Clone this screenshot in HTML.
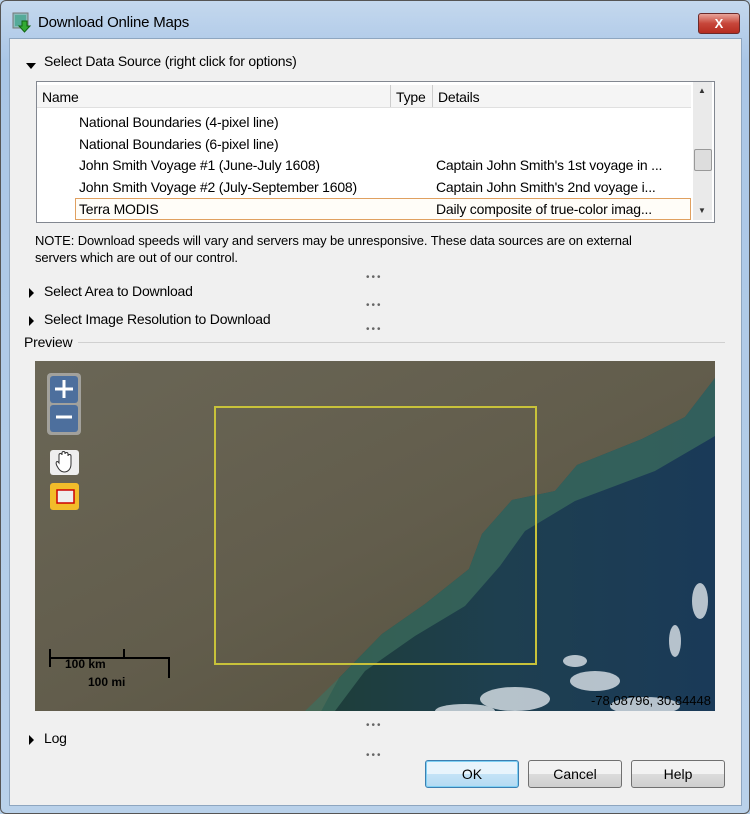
<!DOCTYPE html>
<html><head><style>
body{margin:0;width:750px;height:814px;background:#b9d1ea;font-family:"Liberation Sans",sans-serif;font-size:13px;color:#000;position:relative;overflow:hidden}
.frame{position:absolute;left:0;top:0;width:748px;height:812px;border:1px solid #555;border-radius:6px;background:linear-gradient(#c4d8ee,#aac6e6 60px,#b9d1ea)}
.content{position:absolute;left:9px;top:38px;width:731px;height:766px;background:#f0f0f0;border:1px solid #8ea6c0}
.a{position:absolute;white-space:nowrap}
.t{font-size:14px;letter-spacing:-0.2px}
.tri-d{display:inline-block;width:0;height:0;border-left:5px solid transparent;border-right:5px solid transparent;border-top:6px solid #000}
.tri-r{display:inline-block;width:0;height:0;border-top:5px solid transparent;border-bottom:5px solid transparent;border-left:5px solid #000}
.btn{position:absolute;top:760px;width:92px;height:26px;border:1px solid #707070;border-radius:3px;background:linear-gradient(#f2f2f2 50%,#dcdcdc 50%,#cfcfcf);text-align:center;line-height:26px;font-size:14px}
.dots{position:absolute;left:366px;font-size:10px;letter-spacing:2px;color:#666}
</style></head><body>
<div class="frame"></div>
<svg class="a" style="left:12px;top:12px" width="20" height="22"><rect x="1" y="1" width="15" height="15" fill="#8bb" stroke="#777"/><rect x="3" y="3" width="11" height="11" fill="#5a9"/><path d="M10 9 h5 v5 h3 l-5.5 6 -5.5-6 h3z" fill="#3a3" stroke="#161"/></svg>
<div class="a t" style="left:38px;top:14px;font-size:15px">Download Online Maps</div>
<div class="a" style="left:698px;top:13px;width:40px;height:19px;border:1px solid #6b2a2a;border-radius:3px;background:linear-gradient(#e8a49a,#c7463a 50%,#b52c20);color:#fff;text-align:center;font-weight:bold;line-height:19px;font-size:13px">X</div>
<div class="content"></div>
<div class="a" style="left:26px;top:57px"><span class="tri-d"></span></div>
<div class="a t" style="left:44px;top:53px">Select Data Source (right click for options)</div>
<div class="a" style="left:36px;top:81px;width:677px;height:140px;border:1px solid #828790;background:#fff"></div>
<div class="a" style="left:37px;top:85px;width:654px;height:22px;background:#f5f5f5;border-bottom:1px solid #e0e0e0"></div>
<div class="a" style="left:390px;top:85px;width:1px;height:22px;background:#ccc"></div>
<div class="a" style="left:432px;top:85px;width:1px;height:22px;background:#ccc"></div>
<div class="a t" style="left:42px;top:89px">Name</div>
<div class="a t" style="left:396px;top:89px">Type</div>
<div class="a t" style="left:438px;top:89px">Details</div>
<div class="a" style="left:693px;top:82px;width:19px;height:138px;background:#eaeaea"></div>
<div class="a" style="left:698px;top:86px;font-size:8px;color:#333">▲</div>
<div class="a" style="left:698px;top:206px;font-size:8px;color:#333">▼</div>
<div class="a" style="left:694px;top:149px;width:16px;height:20px;border:1px solid #999;background:#ddd;border-radius:2px"></div>
<div class="a t" style="left:79px;top:114px">National Boundaries (4-pixel line)</div>
<div class="a t" style="left:79px;top:136px">National Boundaries (6-pixel line)</div>
<div class="a t" style="left:79px;top:157px">John Smith Voyage #1 (June-July 1608)</div>
<div class="a t" style="left:436px;top:157px">Captain John Smith's 1st voyage in ...</div>
<div class="a t" style="left:79px;top:179px">John Smith Voyage #2 (July-September 1608)</div>
<div class="a t" style="left:436px;top:179px">Captain John Smith's 2nd voyage i...</div>
<div class="a" style="left:75px;top:198px;width:614px;height:20px;border:1px solid #e0a060;background:#fffdf8"></div>
<div class="a t" style="left:79px;top:201px">Terra MODIS</div>
<div class="a t" style="left:436px;top:201px">Daily composite of true-color imag...</div>
<div class="a" style="left:35px;top:232px;font-size:13px;line-height:17px;white-space:normal;width:690px;letter-spacing:-0.1px">NOTE: Download speeds will vary and servers may be unresponsive. These data sources are on external<br>servers which are out of our control.</div>
<div class="dots" style="top:272px">•••</div>
<div class="a" style="left:29px;top:286px"><span class="tri-r"></span></div>
<div class="a t" style="left:44px;top:283px">Select Area to Download</div>
<div class="dots" style="top:300px">•••</div>
<div class="a" style="left:29px;top:314px"><span class="tri-r"></span></div>
<div class="a t" style="left:44px;top:311px">Select Image Resolution to Download</div>
<div class="dots" style="top:324px">•••</div>
<div class="a t" style="left:24px;top:334px">Preview</div>
<div class="a" style="left:78px;top:342px;width:647px;height:1px;background:#d0d0d0"></div>
<svg class="a" style="left:35px;top:361px" width="680" height="350">
<defs><linearGradient id="l" x1="0" y1="0" x2="1" y2="1"><stop offset="0" stop-color="#6a6656"/><stop offset="0.5" stop-color="#625d4c"/><stop offset="1" stop-color="#544f3c"/></linearGradient>
<linearGradient id="o" x1="0" y1="0" x2="1" y2="0"><stop offset="0" stop-color="#1e3d36"/><stop offset="0.5" stop-color="#1e3f50"/><stop offset="1" stop-color="#1a3a58"/></linearGradient></defs>
<rect width="680" height="350" fill="url(#l)"/>
<path d="M680 17 L650 56 607 78 542 104 520 130 477 139 447 173 434 208 390 243 347 273 304 317 269 382 260 350 680 350Z" fill="url(#o)"/>
<path d="M680 17 L650 56 607 78 542 104 520 130 477 139 447 173 434 208 390 243 347 273 304 317 270 350 300 350 330 310 380 275 430 245 465 205 490 170 540 140 620 110 680 75Z" fill="#3d6f5e" opacity=".7"/>
<g fill="#dde4ea" opacity=".8"><ellipse cx="480" cy="338" rx="35" ry="12"/><ellipse cx="560" cy="320" rx="25" ry="10"/><ellipse cx="610" cy="345" rx="35" ry="9"/><ellipse cx="540" cy="300" rx="12" ry="6"/><ellipse cx="665" cy="240" rx="8" ry="18"/><ellipse cx="640" cy="280" rx="6" ry="16"/><ellipse cx="430" cy="350" rx="30" ry="7"/></g>
<rect x="180" y="46" width="321" height="257" fill="none" stroke="#c8c23a" stroke-width="2"/>
<rect x="12" y="12" width="34" height="62" rx="4" fill="#bbb" opacity=".7"/>
<rect x="15" y="15" width="28" height="27" rx="3" fill="#4d6f9d"/><rect x="15" y="44" width="28" height="27" rx="3" fill="#4d6f9d"/>
<path d="M29 19v18M20 28h18M21 56h16" stroke="#fff" stroke-width="3"/>
<rect x="15" y="89" width="29" height="25" rx="3" fill="#eee"/><path d="M22 105 c-2-4 0-6 2-3 v-8 c0-2 3-2 3 0 v-2 c0-2 3-2 3 0 v1 c0-2 3-2 3 0 v2 c0-2 3-2 3 0 v8 c0 5-3 8-7 8 c-3 0-5-2-7-6z" fill="#fff" stroke="#333" stroke-width="1"/>
<rect x="15" y="122" width="29" height="27" rx="3" fill="#f2bc2a"/><rect x="22" y="129" width="17" height="13" fill="#eee" stroke="#c00" stroke-width="1.5"/>
<path d="M15 288v18M15 297h119v20M89 288v9" stroke="#000" stroke-width="2" fill="none"/>
<text x="30" y="307" font-size="12" font-weight="bold" font-family="Liberation Sans">100 km</text>
<text x="53" y="325" font-size="12" font-weight="bold" font-family="Liberation Sans">100 mi</text>
<text x="676" y="344" font-size="13" text-anchor="end" font-family="Liberation Sans">-78.08796, 30.84448</text>
</svg>
<div class="dots" style="top:720px">•••</div>
<div class="a" style="left:29px;top:733px"><span class="tri-r"></span></div>
<div class="a t" style="left:44px;top:730px">Log</div>
<div class="dots" style="top:750px">•••</div>
<div class="btn" style="left:425px;border-color:#3c7fb1;box-shadow:inset 0 0 0 1px #7fd0f4;background:linear-gradient(#e8f4fc 50%,#c4e3f7 50%,#b4daf2)">OK</div>
<div class="btn" style="left:528px">Cancel</div>
<div class="btn" style="left:631px">Help</div>
</body></html>
